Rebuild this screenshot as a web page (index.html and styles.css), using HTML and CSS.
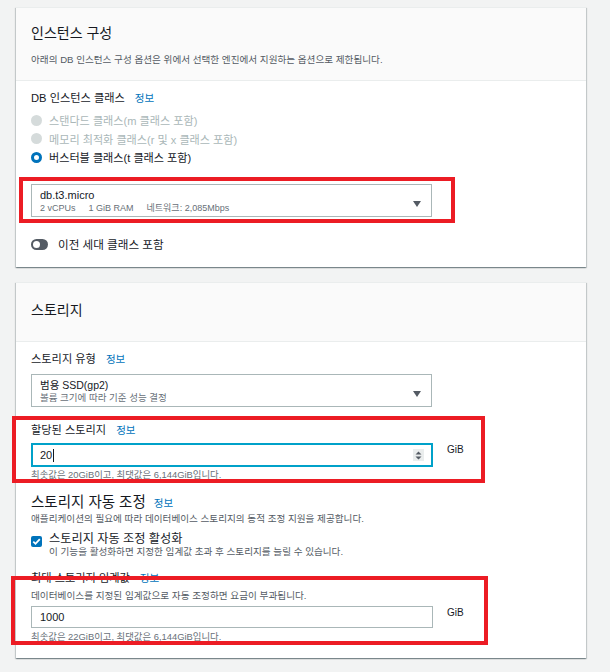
FILE: index.html
```html
<!DOCTYPE html>
<html lang="ko">
<head>
<meta charset="utf-8">
<title>RDS 설정</title>
<link rel="stylesheet" href="styles.css">
</head>
<body>
<div class="page">
  <section class="card">
    <header class="card-header">
      <h2 class="card-title">인스턴스 구성</h2>
      <p class="card-desc">아래의 DB 인스턴스 구성 옵션은 위에서 선택한 엔진에서 지원하는 옵션으로 제한됩니다.</p>
    </header>
    <div class="card-body">
      <div class="label"><span>DB 인스턴스 클래스</span><span class="info">정보</span></div>
      <ul class="radios">
        <li class="radio disabled"><span class="dot"></span><span>스탠다드 클래스(m 클래스 포함)</span></li>
        <li class="radio disabled"><span class="dot"></span><span>메모리 최적화 클래스(r 및 x 클래스 포함)</span></li>
        <li class="radio checked"><span class="dot"></span><span>버스터블 클래스(t 클래스 포함)</span></li>
      </ul>
      <div class="select select-class mark mark-1">
        <div class="select-text">
          <div class="select-main">db.t3.micro</div>
          <div class="select-sub specs"><span>2 vCPUs</span><span>1 GiB RAM</span><span>네트워크: 2,085Mbps</span></div>
        </div>
        <svg class="caret" width="8" height="6" viewBox="0 0 8 6"><path d="M0 0H8L4 6Z"/></svg>
      </div>
      <div class="toggle-row">
        <span class="toggle"><span class="knob"></span></span>
        <span>이전 세대 클래스 포함</span>
      </div>
    </div>
  </section>

  <section class="card">
    <header class="card-header card-header-plain">
      <h2 class="card-title">스토리지</h2>
    </header>
    <div class="card-body">
      <div class="label"><span>스토리지 유형</span><span class="info">정보</span></div>
      <div class="select select-type">
        <div class="select-text">
          <div class="select-main ko">범용 SSD(gp2)</div>
          <div class="select-sub">볼륨 크기에 따라 기준 성능 결정</div>
        </div>
        <svg class="caret" width="8" height="6" viewBox="0 0 8 6"><path d="M0 0H8L4 6Z"/></svg>
      </div>

      <div class="field field-alloc mark mark-2">
        <div class="label"><span>할당된 스토리지</span><span class="info">정보</span></div>
        <div class="input-row">
          <div class="input focused">
            <span class="value">20</span><span class="cursor"></span>
            <span class="spinner">
              <svg width="7" height="9" viewBox="0 0 7 9"><path d="M0.5 3.5H6.5L3.5 0.5Z M0.5 5.5H6.5L3.5 8.5Z"/></svg>
            </span>
          </div>
          <span class="unit">GiB</span>
        </div>
        <p class="hint">최솟값은 20GiB이고, 최댓값은 6,144GiB입니다.</p>
      </div>

      <h3 class="subhead"><span>스토리지 자동 조정</span><span class="info">정보</span></h3>
      <p class="sub-desc">애플리케이션의 필요에 따라 데이터베이스 스토리지의 동적 조정 지원을 제공합니다.</p>
      <div class="check-row">
        <span class="checkbox">
          <svg width="11" height="11" viewBox="0 0 11 11"><path d="M2.3 5.6L4.5 7.8L8.8 3.2" fill="none" stroke="#fff" stroke-width="1.8"/></svg>
        </span>
        <div class="check-text">
          <div class="check-label">스토리지 자동 조정 활성화</div>
          <div class="check-desc">이 기능을 활성화하면 지정한 임계값 초과 후 스토리지를 늘릴 수 있습니다.</div>
        </div>
      </div>

      <div class="field field-max mark mark-3">
        <div class="label"><span>최대 스토리지 임계값</span><span class="info">정보</span></div>
        <p class="field-desc">데이터베이스를 지정된 임계값으로 자동 조정하면 요금이 부과됩니다.</p>
        <div class="input-row">
          <div class="input plain"><span class="value">1000</span></div>
          <span class="unit">GiB</span>
        </div>
        <p class="hint">최솟값은 22GiB이고, 최댓값은 6,144GiB입니다.</p>
      </div>
    </div>
  </section>
</div>
</body>
</html>
```
FILE: styles.css
```css
* { box-sizing: border-box; }
body {
  margin: 0;
  background: #f2f3f3;
  font-family: "Liberation Sans", "Noto Sans CJK KR", sans-serif;
  color: #16191f;
}
p, h2, h3, ul { margin: 0; padding: 0; }
ul { list-style: none; }

.page {
  padding: 7px 0 20px 16px;
  width: 586px;
  display: flex;
  flex-direction: column;
  gap: 15px;
}
.card {
  background: #fff;
  border-top: 1px solid #eaeded;
  box-shadow: 0 1px 1px 0 rgba(0, 28, 36, .3), 1px 1px 1px 0 rgba(0, 28, 36, .15), -1px 1px 1px 0 rgba(0, 28, 36, .15);
}
.card-header {
  background: #fafafa;
  border-bottom: 1px solid #eaeded;
  padding: 16px 15px 13px;
}
.card-header-plain { padding: 18px 15px 22px; }
.card-title {
  font-size: 14px;
  line-height: 18px;
  font-weight: 400;
}
.card-desc {
  margin-top: 11px;
  font-size: 9.6px;
  line-height: 14px;
  color: #545b64;
}
.card-body {
  padding: 10px 15px 15px;
}

.label {
  display: flex;
  gap: 10px;
  font-size: 11.2px;
  line-height: 15px;
}
.info {
  color: #0073bb;
  font-size: 10.5px;
}

.radios { margin-top: 5px; }
.radio {
  display: flex;
  align-items: center;
  gap: 7px;
  height: 18.5px;
  font-size: 11.1px;
}
.dot {
  width: 11px;
  height: 11px;
  border-radius: 50%;
  flex: none;
}
.radio.disabled { color: #aab7b8; }
.radio.disabled .dot { background: #d5dbdb; }
.radio.checked .dot { border: 3.5px solid #0073bb; background: #fff; }

.select {
  display: flex;
  justify-content: space-between;
  align-items: flex-start;
  width: 401px;
  height: 33px;
  border: 1px solid #aab7b8;
  padding: 4px 10px 2px 8px;
}
.select-class { margin-top: 17.5px; }
.select-type { margin-top: 7px; }
.select-text { display: flex; flex-direction: column; }
.select-main { font-size: 11px; line-height: 13px; }
.select-main.ko { font-size: 10.5px; }
.select-sub {
  font-size: 9.5px;
  line-height: 12px;
  color: #687078;
}
.specs { display: flex; gap: 13px; font-size: 9px; }
.caret { fill: #545b64; margin-top: 12px; flex: none; }

.toggle-row {
  display: flex;
  align-items: center;
  gap: 10px;
  margin-top: 19px;
  height: 16px;
  font-size: 11.6px;
}
.toggle {
  width: 17px;
  height: 11px;
  border-radius: 6px;
  background: #545b64;
  display: flex;
  align-items: center;
  padding-left: 2px;
  flex: none;
}
.knob {
  width: 7px;
  height: 7px;
  border-radius: 50%;
  background: #fff;
}

.mark { position: relative; }
.mark::after {
  content: "";
  position: absolute;
  border: 4px solid #ec1c24;
  pointer-events: none;
}
.mark-1::after { top: -8px; left: -13px; right: -24px; bottom: -7px; }
.mark-2::after { top: -6.5px; left: -19px; right: 86px; bottom: -2px; }
.mark-3::after { top: 4.5px; left: -20px; right: 83px; bottom: -2px; }

.field-alloc { margin-top: 15.5px; }
.field-max { margin-top: 13.5px; }
.field-alloc .input-row { margin-top: 5.5px; }
.field-max .input-row { margin-top: 4px; }
.field-desc {
  margin-top: 3.5px;
  font-size: 9.65px;
  line-height: 12px;
  color: #545b64;
}
.input-row {
  display: flex;
  align-items: flex-start;
  gap: 14px;
}
.input {
  width: 402px;
  display: flex;
  align-items: center;
  font-size: 11px;
}
.input.focused {
  height: 24px;
  border: 2px solid #00a1c9;
  padding: 0 7px 0 7px;
}
.input.plain {
  height: 22px;
  border: 1px solid #aab7b8;
  padding: 0 8px;
}
.cursor {
  width: 1px;
  height: 13px;
  background: #16191f;
  margin-left: 1px;
}
.spinner {
  margin-left: auto;
  width: 11px;
  height: 12px;
  background: #eaeded;
  display: flex;
  align-items: center;
  justify-content: center;
}
.spinner svg { fill: #545b64; }
.unit {
  font-size: 10px;
  line-height: 14px;
  color: #16191f;
}
.hint {
  margin-top: 2px;
  font-size: 9.4px;
  line-height: 12px;
  color: #687078;
}
.field-max .hint { margin-top: 3px; }

.subhead {
  margin-top: 11.5px;
  display: flex;
  align-items: baseline;
  gap: 8px;
  font-size: 14.5px;
  line-height: 18px;
  font-weight: 400;
}
.sub-desc {
  font-size: 9.6px;
  line-height: 13px;
  color: #545b64;
}
.check-row {
  margin-top: 7px;
  display: flex;
  gap: 7px;
}
.checkbox {
  width: 11px;
  height: 11px;
  margin-top: 4px;
  border-radius: 2px;
  background: #0073bb;
  flex: none;
  display: flex;
}
.check-label { font-size: 12.2px; line-height: 14px; }
.check-desc {
  font-size: 9.6px;
  line-height: 12px;
  color: #545b64;
}
```
